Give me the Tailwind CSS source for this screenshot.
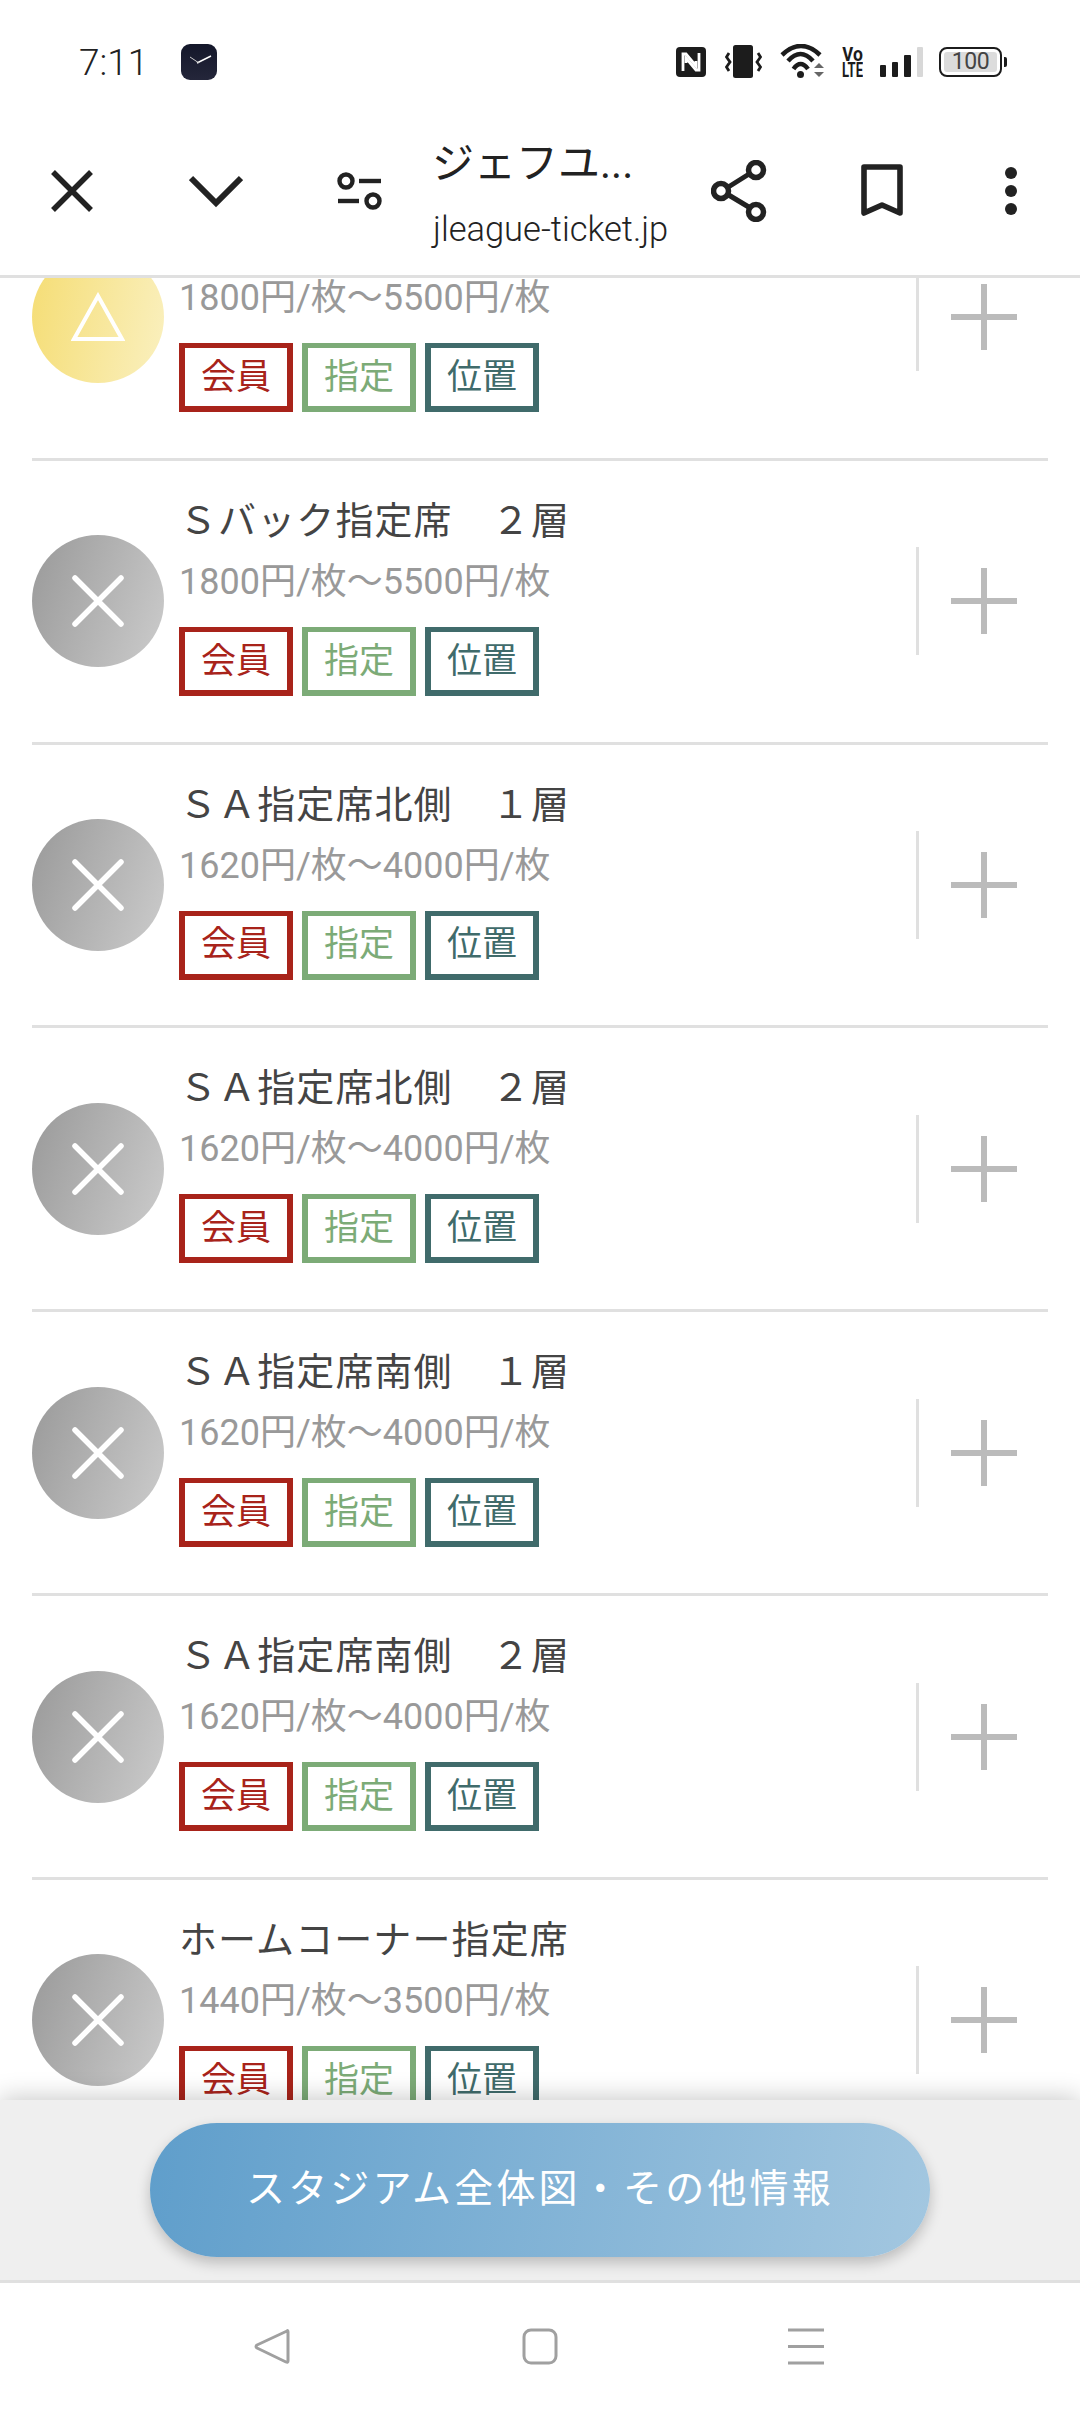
<!DOCTYPE html>
<html lang="ja">
<head>
<meta charset="utf-8">
<script src="https://cdn.jsdelivr.net/npm/@tailwindcss/browser@4"></script>
</head>
<body class="bg-white">
<div class="w-[1080px] h-[2412px] flex flex-col overflow-hidden font-['Roboto','Noto_Sans_CJK_JP',sans-serif]">

  <!-- status + toolbar -->
  <header class="relative z-20 bg-white shrink-0">
    <div class="h-[120px] flex items-center text-[#222] pt-[4px]">
      <span class="ml-[79px] w-[70px] text-[37px] leading-none font-light">7:11</span>
      <svg class="ml-[32px]" width="36" height="36" viewBox="0 0 36 36"><defs><linearGradient id="clk" x1="0" y1="0" x2="0" y2="1"><stop offset="0" stop-color="#14172a"/><stop offset="1" stop-color="#24263a"/></linearGradient></defs><rect width="36" height="36" rx="9" fill="url(#clk)"/><path d="M16 19 L30 12" stroke="#fff" stroke-width="1.4"/><path d="M18 19 L9 13" stroke="#ccc" stroke-width="1"/></svg>

      <svg class="ml-[459px]" width="30" height="30" viewBox="0 0 30 30"><rect width="30" height="30" rx="4" fill="#1c1c1c"/><path d="M7 24 V7 H10 L20 19 V14" fill="none" stroke="#fff" stroke-width="2.8"/><path d="M23 6 V23 H20 L10 11 V16" fill="none" stroke="#fff" stroke-width="2.8"/></svg>
      <svg class="ml-[19px]" width="37" height="34" viewBox="0 0 37 34"><rect x="8" y="0" width="20" height="33" rx="2.500" fill="#1c1c1c"/><path d="M4 8 L1.500 12 L5 17 L1.500 22 L4 26 M33 8 L35.500 12 L32 17 L35.500 22 L33 26" fill="none" stroke="#1c1c1c" stroke-width="2.800"/></svg>
      <svg class="ml-[18px]" width="45" height="36" viewBox="0 0 45 36"><path d="M2 11 Q21 -7 40 11" fill="none" stroke="#1c1c1c" stroke-width="4.5"/><path d="M8 17 Q20.500 3 33 17" fill="none" stroke="#1c1c1c" stroke-width="4.5"/><path d="M13.500 25 Q20.500 15 28 25" fill="none" stroke="#1c1c1c" stroke-width="4.5"/><circle cx="20.500" cy="30.500" r="3.500" fill="#1c1c1c"/><path d="M34 24 L39 19 L44 24 Z" fill="#666"/><path d="M34 28 L39 33 L44 28 Z" fill="#666"/></svg>
      <svg class="ml-[17px]" width="21" height="30" viewBox="0 0 21 30"><text x="0" y="14" font-size="19.500" font-weight="700" fill="#1c1c1c" textLength="21" lengthAdjust="spacingAndGlyphs">Vo</text><text x="0" y="30" font-size="19.500" font-weight="700" fill="#1c1c1c" textLength="21" lengthAdjust="spacingAndGlyphs">LTE</text></svg>
      <div class="ml-[17px] flex items-end h-[30px] gap-[6px]">
        <span class="w-[6px] h-[12px] rounded-[1px] bg-[#1c1c1c]"></span>
        <span class="w-[6px] h-[15px] rounded-[1px] bg-[#1c1c1c]"></span>
        <span class="w-[7px] h-[22px] rounded-[1px] bg-[#1c1c1c]"></span>
        <span class="w-[6px] h-[30px] rounded-[1px] bg-[#d8d8d8]"></span>
      </div>
      <div class="ml-[16px] flex items-center">
        <div class="w-[63px] h-[30px] rounded-[8px] border-[2.5px] border-[#1c1c1c] p-[3px] flex">
          <span class="flex-1 rounded-[3px] bg-[#dcdcdc] text-[#444] text-[23px] tracking-[-0.5px] leading-[20px] text-center">100</span>
        </div>
        <span class="w-[3px] h-[10px] ml-[2px] rounded-r-[2px] bg-[#1c1c1c]"></span>
      </div>
    </div>

    <div class="h-[155px] flex items-center border-0 pb-[13px]">
      <svg class="ml-[51px]" width="42" height="42" viewBox="0 0 42 42"><path d="M2 2 L40 40 M40 2 L2 40" stroke="#222" stroke-width="5.5"/></svg>
      <svg class="ml-[96px]" width="54" height="34" viewBox="0 0 54 34"><path d="M2 4 L27 29 L52 4" fill="none" stroke="#222" stroke-width="6"/></svg>
      <svg class="ml-[94px]" width="45" height="38" viewBox="0 0 45 38"><circle cx="9" cy="9" r="6.5" fill="none" stroke="#222" stroke-width="4.4"/><path d="M22 9 H44" stroke="#222" stroke-width="4.4"/><path d="M1 29 H22" stroke="#222" stroke-width="4.4"/><circle cx="36" cy="29" r="6.5" fill="none" stroke="#222" stroke-width="4.4"/></svg>
      <div class="ml-[50px] w-[240px] pt-[6px]">
        <div class="text-[42px] leading-[50px] text-[#222] whitespace-nowrap">ジェフユ...</div>
        <div class="mt-[20px] pl-[1px] text-[34.5px] leading-[40px] font-light text-[#222] whitespace-nowrap">jleague-ticket.jp</div>
      </div>
      <svg class="ml-[39px]" width="56" height="62" viewBox="0 0 56 62"><path d="M11 31 L46 9 M11 31 L46 52" stroke="#222" stroke-width="5"/><circle cx="10" cy="31" r="7.5" fill="#fff" stroke="#222" stroke-width="5.5"/><circle cx="45" cy="10" r="7.5" fill="#fff" stroke="#222" stroke-width="5.5"/><circle cx="45" cy="52" r="7.5" fill="#fff" stroke="#222" stroke-width="5.5"/></svg>
      <svg class="ml-[94px]" width="42" height="55" viewBox="0 0 42 55"><path d="M3 3 H39 V49 L21 41 L3 49 Z" fill="none" stroke="#222" stroke-width="5.6" stroke-linejoin="round"/></svg>
      <svg class="ml-[102px]" width="12" height="48" viewBox="0 0 12 48"><circle cx="6" cy="6" r="6" fill="#222"/><circle cx="6" cy="24" r="6" fill="#222"/><circle cx="6" cy="42" r="6" fill="#222"/></svg>
    </div>
    <div class="h-[3px] bg-[#e0e0e0]"></div>
  </header>

  <!-- list -->
  <main class="flex-1 min-h-0 overflow-hidden bg-white">
    <ul class="-mt-[101px] mx-[32px]">

      <li class="h-[283.83px] border-b-[3px] border-[#e0e0e0] flex items-center">
        <div class="w-[132px] h-[132px] shrink-0 rounded-full bg-linear-[100deg] from-[#f5dd74] to-[#faf0bf] flex items-center justify-center">
          <svg width="54" height="50" viewBox="0 0 54 50"><path d="M27 4 L51 47 H3 Z" fill="none" stroke="#fff" stroke-width="4"/></svg>
        </div>
        <div class="flex-1 self-start pt-[31px] pl-[15px]">
          <div class="h-[60px]"></div>
          <div class="h-[61px] text-[36px] leading-[60px] text-[#999] whitespace-nowrap">1800円/枚〜5500円/枚</div>
          <div class="mt-[14px] flex gap-[9px] text-[35px]">
            <span class="w-[114px] h-[69px] pt-[2px] border-x-[6px] border-t-[5px] border-b-[6px] border-[#a8231a] text-[#a8231a] flex items-center justify-center">会員</span>
            <span class="w-[114px] h-[69px] pt-[2px] border-x-[6px] border-t-[5px] border-b-[6px] border-[#7cab77] text-[#7cab77] flex items-center justify-center">指定</span>
            <span class="w-[114px] h-[69px] pt-[2px] border-x-[6px] border-t-[5px] border-b-[6px] border-[#406b6b] text-[#406b6b] flex items-center justify-center">位置</span>
          </div>
        </div>
        <span class="w-[3px] h-[108px] bg-[#e0e0e0]"></span>
        <span class="w-[129px] flex items-center justify-center">
          <svg width="66" height="66" viewBox="0 0 66 66"><path d="M0 33 H66 M33 0 V66" stroke="#bbb" stroke-width="6"/></svg>
        </span>
      </li>

      <li class="h-[283.83px] border-b-[3px] border-[#e0e0e0] flex items-center">
        <div class="w-[132px] h-[132px] shrink-0 rounded-full bg-linear-[110deg] from-[#999] to-[#ccc] flex items-center justify-center">
          <svg width="52" height="52" viewBox="0 0 52 52"><path d="M3 3 L49 49 M49 3 L3 49" stroke="#fff" stroke-width="5.5" stroke-linecap="round"/></svg>
        </div>
        <div class="flex-1 self-start pt-[31px] pl-[15px]">
          <div class="h-[60px] text-[38px] leading-[58px] tracking-[1.1px] text-[#444] whitespace-nowrap">Ｓバック指定席　２層</div>
          <div class="h-[61px] text-[36px] leading-[60px] text-[#999] whitespace-nowrap">1800円/枚〜5500円/枚</div>
          <div class="mt-[14px] flex gap-[9px] text-[35px]">
            <span class="w-[114px] h-[69px] pt-[2px] border-x-[6px] border-t-[5px] border-b-[6px] border-[#a8231a] text-[#a8231a] flex items-center justify-center">会員</span>
            <span class="w-[114px] h-[69px] pt-[2px] border-x-[6px] border-t-[5px] border-b-[6px] border-[#7cab77] text-[#7cab77] flex items-center justify-center">指定</span>
            <span class="w-[114px] h-[69px] pt-[2px] border-x-[6px] border-t-[5px] border-b-[6px] border-[#406b6b] text-[#406b6b] flex items-center justify-center">位置</span>
          </div>
        </div>
        <span class="w-[3px] h-[108px] bg-[#e0e0e0]"></span>
        <span class="w-[129px] flex items-center justify-center">
          <svg width="66" height="66" viewBox="0 0 66 66"><path d="M0 33 H66 M33 0 V66" stroke="#bbb" stroke-width="6"/></svg>
        </span>
      </li>

      <li class="h-[283.83px] border-b-[3px] border-[#e0e0e0] flex items-center">
        <div class="w-[132px] h-[132px] shrink-0 rounded-full bg-linear-[110deg] from-[#999] to-[#ccc] flex items-center justify-center">
          <svg width="52" height="52" viewBox="0 0 52 52"><path d="M3 3 L49 49 M49 3 L3 49" stroke="#fff" stroke-width="5.5" stroke-linecap="round"/></svg>
        </div>
        <div class="flex-1 self-start pt-[31px] pl-[15px]">
          <div class="h-[60px] text-[38px] leading-[58px] tracking-[1.1px] text-[#444] whitespace-nowrap">ＳＡ指定席北側　１層</div>
          <div class="h-[61px] text-[36px] leading-[60px] text-[#999] whitespace-nowrap">1620円/枚〜4000円/枚</div>
          <div class="mt-[14px] flex gap-[9px] text-[35px]">
            <span class="w-[114px] h-[69px] pt-[2px] border-x-[6px] border-t-[5px] border-b-[6px] border-[#a8231a] text-[#a8231a] flex items-center justify-center">会員</span>
            <span class="w-[114px] h-[69px] pt-[2px] border-x-[6px] border-t-[5px] border-b-[6px] border-[#7cab77] text-[#7cab77] flex items-center justify-center">指定</span>
            <span class="w-[114px] h-[69px] pt-[2px] border-x-[6px] border-t-[5px] border-b-[6px] border-[#406b6b] text-[#406b6b] flex items-center justify-center">位置</span>
          </div>
        </div>
        <span class="w-[3px] h-[108px] bg-[#e0e0e0]"></span>
        <span class="w-[129px] flex items-center justify-center">
          <svg width="66" height="66" viewBox="0 0 66 66"><path d="M0 33 H66 M33 0 V66" stroke="#bbb" stroke-width="6"/></svg>
        </span>
      </li>

      <li class="h-[283.83px] border-b-[3px] border-[#e0e0e0] flex items-center">
        <div class="w-[132px] h-[132px] shrink-0 rounded-full bg-linear-[110deg] from-[#999] to-[#ccc] flex items-center justify-center">
          <svg width="52" height="52" viewBox="0 0 52 52"><path d="M3 3 L49 49 M49 3 L3 49" stroke="#fff" stroke-width="5.5" stroke-linecap="round"/></svg>
        </div>
        <div class="flex-1 self-start pt-[31px] pl-[15px]">
          <div class="h-[60px] text-[38px] leading-[58px] tracking-[1.1px] text-[#444] whitespace-nowrap">ＳＡ指定席北側　２層</div>
          <div class="h-[61px] text-[36px] leading-[60px] text-[#999] whitespace-nowrap">1620円/枚〜4000円/枚</div>
          <div class="mt-[14px] flex gap-[9px] text-[35px]">
            <span class="w-[114px] h-[69px] pt-[2px] border-x-[6px] border-t-[5px] border-b-[6px] border-[#a8231a] text-[#a8231a] flex items-center justify-center">会員</span>
            <span class="w-[114px] h-[69px] pt-[2px] border-x-[6px] border-t-[5px] border-b-[6px] border-[#7cab77] text-[#7cab77] flex items-center justify-center">指定</span>
            <span class="w-[114px] h-[69px] pt-[2px] border-x-[6px] border-t-[5px] border-b-[6px] border-[#406b6b] text-[#406b6b] flex items-center justify-center">位置</span>
          </div>
        </div>
        <span class="w-[3px] h-[108px] bg-[#e0e0e0]"></span>
        <span class="w-[129px] flex items-center justify-center">
          <svg width="66" height="66" viewBox="0 0 66 66"><path d="M0 33 H66 M33 0 V66" stroke="#bbb" stroke-width="6"/></svg>
        </span>
      </li>

      <li class="h-[283.83px] border-b-[3px] border-[#e0e0e0] flex items-center">
        <div class="w-[132px] h-[132px] shrink-0 rounded-full bg-linear-[110deg] from-[#999] to-[#ccc] flex items-center justify-center">
          <svg width="52" height="52" viewBox="0 0 52 52"><path d="M3 3 L49 49 M49 3 L3 49" stroke="#fff" stroke-width="5.5" stroke-linecap="round"/></svg>
        </div>
        <div class="flex-1 self-start pt-[31px] pl-[15px]">
          <div class="h-[60px] text-[38px] leading-[58px] tracking-[1.1px] text-[#444] whitespace-nowrap">ＳＡ指定席南側　１層</div>
          <div class="h-[61px] text-[36px] leading-[60px] text-[#999] whitespace-nowrap">1620円/枚〜4000円/枚</div>
          <div class="mt-[14px] flex gap-[9px] text-[35px]">
            <span class="w-[114px] h-[69px] pt-[2px] border-x-[6px] border-t-[5px] border-b-[6px] border-[#a8231a] text-[#a8231a] flex items-center justify-center">会員</span>
            <span class="w-[114px] h-[69px] pt-[2px] border-x-[6px] border-t-[5px] border-b-[6px] border-[#7cab77] text-[#7cab77] flex items-center justify-center">指定</span>
            <span class="w-[114px] h-[69px] pt-[2px] border-x-[6px] border-t-[5px] border-b-[6px] border-[#406b6b] text-[#406b6b] flex items-center justify-center">位置</span>
          </div>
        </div>
        <span class="w-[3px] h-[108px] bg-[#e0e0e0]"></span>
        <span class="w-[129px] flex items-center justify-center">
          <svg width="66" height="66" viewBox="0 0 66 66"><path d="M0 33 H66 M33 0 V66" stroke="#bbb" stroke-width="6"/></svg>
        </span>
      </li>

      <li class="h-[283.83px] border-b-[3px] border-[#e0e0e0] flex items-center">
        <div class="w-[132px] h-[132px] shrink-0 rounded-full bg-linear-[110deg] from-[#999] to-[#ccc] flex items-center justify-center">
          <svg width="52" height="52" viewBox="0 0 52 52"><path d="M3 3 L49 49 M49 3 L3 49" stroke="#fff" stroke-width="5.5" stroke-linecap="round"/></svg>
        </div>
        <div class="flex-1 self-start pt-[31px] pl-[15px]">
          <div class="h-[60px] text-[38px] leading-[58px] tracking-[1.1px] text-[#444] whitespace-nowrap">ＳＡ指定席南側　２層</div>
          <div class="h-[61px] text-[36px] leading-[60px] text-[#999] whitespace-nowrap">1620円/枚〜4000円/枚</div>
          <div class="mt-[14px] flex gap-[9px] text-[35px]">
            <span class="w-[114px] h-[69px] pt-[2px] border-x-[6px] border-t-[5px] border-b-[6px] border-[#a8231a] text-[#a8231a] flex items-center justify-center">会員</span>
            <span class="w-[114px] h-[69px] pt-[2px] border-x-[6px] border-t-[5px] border-b-[6px] border-[#7cab77] text-[#7cab77] flex items-center justify-center">指定</span>
            <span class="w-[114px] h-[69px] pt-[2px] border-x-[6px] border-t-[5px] border-b-[6px] border-[#406b6b] text-[#406b6b] flex items-center justify-center">位置</span>
          </div>
        </div>
        <span class="w-[3px] h-[108px] bg-[#e0e0e0]"></span>
        <span class="w-[129px] flex items-center justify-center">
          <svg width="66" height="66" viewBox="0 0 66 66"><path d="M0 33 H66 M33 0 V66" stroke="#bbb" stroke-width="6"/></svg>
        </span>
      </li>

      <li class="h-[283.83px] border-b-[3px] border-[#e0e0e0] flex items-center">
        <div class="w-[132px] h-[132px] shrink-0 rounded-full bg-linear-[110deg] from-[#999] to-[#ccc] flex items-center justify-center">
          <svg width="52" height="52" viewBox="0 0 52 52"><path d="M3 3 L49 49 M49 3 L3 49" stroke="#fff" stroke-width="5.5" stroke-linecap="round"/></svg>
        </div>
        <div class="flex-1 self-start pt-[31px] pl-[15px]">
          <div class="h-[60px] text-[38px] leading-[58px] tracking-[1.1px] text-[#444] whitespace-nowrap">ホームコーナー指定席</div>
          <div class="h-[61px] text-[36px] leading-[60px] text-[#999] whitespace-nowrap">1440円/枚〜3500円/枚</div>
          <div class="mt-[14px] flex gap-[9px] text-[35px]">
            <span class="w-[114px] h-[69px] pt-[2px] border-x-[6px] border-t-[5px] border-b-[6px] border-[#a8231a] text-[#a8231a] flex items-center justify-center">会員</span>
            <span class="w-[114px] h-[69px] pt-[2px] border-x-[6px] border-t-[5px] border-b-[6px] border-[#7cab77] text-[#7cab77] flex items-center justify-center">指定</span>
            <span class="w-[114px] h-[69px] pt-[2px] border-x-[6px] border-t-[5px] border-b-[6px] border-[#406b6b] text-[#406b6b] flex items-center justify-center">位置</span>
          </div>
        </div>
        <span class="w-[3px] h-[108px] bg-[#e0e0e0]"></span>
        <span class="w-[129px] flex items-center justify-center">
          <svg width="66" height="66" viewBox="0 0 66 66"><path d="M0 33 H66 M33 0 V66" stroke="#bbb" stroke-width="6"/></svg>
        </span>
      </li>
    </ul>
  </main>

  <!-- bottom button bar -->
  <footer class="relative z-10 shrink-0 h-[183px] bg-[#efefef] border-b-[3px] border-[#e0e0e0] shadow-[0_-2px_24px_rgba(0,0,0,0.22)] pt-[23px] flex justify-center">
    <button class="w-[780px] h-[134px] pb-[2px] rounded-full bg-linear-[100deg] from-[#5f9ecb] to-[#a3c7e0] text-white text-[39px] tracking-[3.2px] shadow-[0_6px_14px_rgba(0,0,0,0.22)]">スタジアム全体図・その他情報</button>
  </footer>

  <!-- nav -->
  <nav class="relative z-20 shrink-0 h-[129px] bg-white flex items-start pt-[45px]">
    <svg class="ml-[254px]" width="36" height="37" viewBox="0 0 36 37"><path d="M33 3 Q34 2 34 4 V33 Q34 35 32 34 L3 20 Q1 18.500 3 17 Z" fill="none" stroke="#a0a0a0" stroke-width="3" stroke-linejoin="round"/></svg>
    <svg class="ml-[232px]" width="36" height="37" viewBox="0 0 36 37"><rect x="2" y="2" width="32" height="33" rx="7" fill="none" stroke="#a0a0a0" stroke-width="3"/></svg>
    <svg class="ml-[230px]" width="36" height="37" viewBox="0 0 36 37"><path d="M0 2 H36 M0 18.500 H36 M0 35 H36" stroke="#a0a0a0" stroke-width="3"/></svg>
  </nav>
</div>
</body>
</html>
